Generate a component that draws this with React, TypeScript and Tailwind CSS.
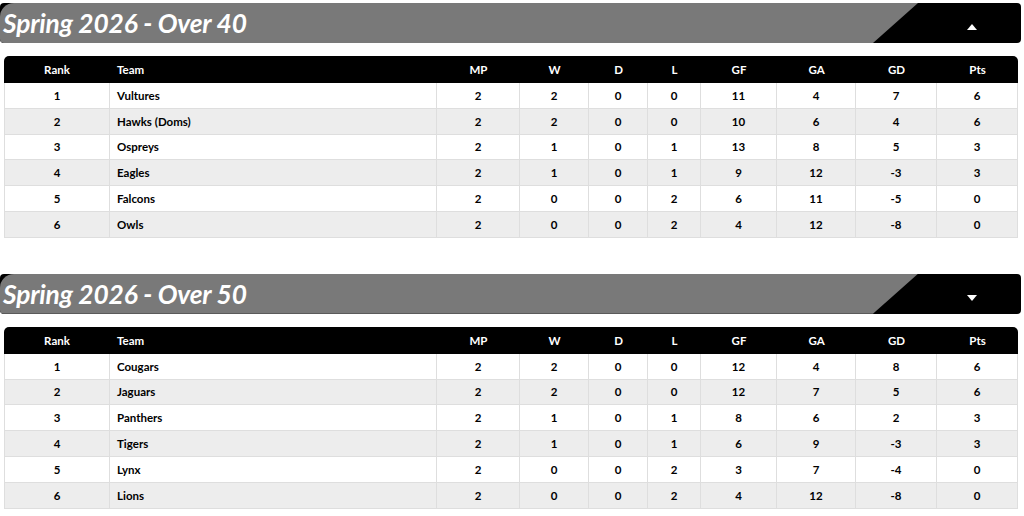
import { clsx as cn } from "clsx";

type Row = {
  rank: number;
  team: string;
  mp: number;
  w: number;
  d: number;
  l: number;
  gf: number;
  ga: number;
  gd: number;
  pts: number;
};

const OVER_40: Row[] = [
  { rank: 1, team: "Vultures", mp: 2, w: 2, d: 0, l: 0, gf: 11, ga: 4, gd: 7, pts: 6 },
  { rank: 2, team: "Hawks (Doms)", mp: 2, w: 2, d: 0, l: 0, gf: 10, ga: 6, gd: 4, pts: 6 },
  { rank: 3, team: "Ospreys", mp: 2, w: 1, d: 0, l: 1, gf: 13, ga: 8, gd: 5, pts: 3 },
  { rank: 4, team: "Eagles", mp: 2, w: 1, d: 0, l: 1, gf: 9, ga: 12, gd: -3, pts: 3 },
  { rank: 5, team: "Falcons", mp: 2, w: 0, d: 0, l: 2, gf: 6, ga: 11, gd: -5, pts: 0 },
  { rank: 6, team: "Owls", mp: 2, w: 0, d: 0, l: 2, gf: 4, ga: 12, gd: -8, pts: 0 },
];

const OVER_50: Row[] = [
  { rank: 1, team: "Cougars", mp: 2, w: 2, d: 0, l: 0, gf: 12, ga: 4, gd: 8, pts: 6 },
  { rank: 2, team: "Jaguars", mp: 2, w: 2, d: 0, l: 0, gf: 12, ga: 7, gd: 5, pts: 6 },
  { rank: 3, team: "Panthers", mp: 2, w: 1, d: 0, l: 1, gf: 8, ga: 6, gd: 2, pts: 3 },
  { rank: 4, team: "Tigers", mp: 2, w: 1, d: 0, l: 1, gf: 6, ga: 9, gd: -3, pts: 3 },
  { rank: 5, team: "Lynx", mp: 2, w: 0, d: 0, l: 2, gf: 3, ga: 7, gd: -4, pts: 0 },
  { rank: 6, team: "Lions", mp: 2, w: 0, d: 0, l: 2, gf: 4, ga: 12, gd: -8, pts: 0 },
];

// column widths in px, summing to 1014
const COLUMNS = [
  { label: "Rank", className: "w-[106px] text-center" },
  { label: "Team", className: "w-[327px] text-left pl-[7px]" },
  { label: "MP", className: "w-[83px] text-center" },
  { label: "W", className: "w-[69px] text-center" },
  { label: "D", className: "w-[59px] text-center" },
  { label: "L", className: "w-[53px] text-center" },
  { label: "GF", className: "w-[76px] text-center" },
  { label: "GA", className: "w-[79px] text-center" },
  { label: "GD", className: "w-[81px] text-center" },
  { label: "Pts", className: "w-[81px] text-center" },
];

function Arrow({ up }: { up: boolean }) {
  return (
    <svg width="10" height="6" viewBox="0 0 10 6" className="mt-[8px]">
      {up ? <polygon points="0,6 5,0 10,6" fill="#fff" /> : <polygon points="0,0 10,0 5,6" fill="#fff" />}
    </svg>
  );
}

function SectionBar({ title, open }: { title: string; open: boolean }) {
  return (
    <div className="flex h-[40px] bg-black rounded-[4px] overflow-hidden">
      <div className="flex-1 bg-[#797979] rounded-tl-[14px] rounded-bl-[3px] [clip-path:polygon(0_0,100%_0,calc(100%-45px)_100%,0_100%)] flex items-center pl-[3px]">
        <h2 className="text-white italic font-bold text-[26.3px] leading-none tracking-[-0.15px] pt-[1px]">{title}</h2>
      </div>
      <div className="w-[103px] flex items-center justify-center pl-[5px]">
        <Arrow up={open} />
      </div>
    </div>
  );
}

function StandingsTable({ rows }: { rows: Row[] }) {
  return (
    <table className="ml-[4px] mr-[3px] mt-[13px] w-[1014px] table-fixed border-separate border-spacing-0 text-[11.5px] font-bold">
      <thead>
        <tr className="h-[27px]">
          {COLUMNS.map((c, i) => (
            <th
              key={c.label}
              className={cn(
                "bg-black text-white font-bold",
                c.className,
                i === 0 && "rounded-tl-[5px]",
                i === COLUMNS.length - 1 && "rounded-tr-[5px]"
              )}
            >
              {c.label}
            </th>
          ))}
        </tr>
      </thead>
      <tbody className="text-black">
        {rows.map((r, idx) => {
          const cells = [r.rank, r.team, r.mp, r.w, r.d, r.l, r.gf, r.ga, r.gd, r.pts];
          return (
            <tr key={r.team} className={cn("h-[25.8px]", idx % 2 === 1 ? "bg-[#ededed]" : "bg-white")}>
              {cells.map((v, i) => (
                <td
                  key={i}
                  className={cn(
                    "border-b border-r border-[#dedede] p-0",
                    i === 0 && "border-l",
                    COLUMNS[i].className
                  )}
                >
                  {v}
                </td>
              ))}
            </tr>
          );
        })}
      </tbody>
    </table>
  );
}

export default function App() {
  return (
    <div className="w-[1024px] bg-white pr-[3px] pt-[3px]" style={{ fontFamily: "Lato, 'Noto Sans', sans-serif" }}>
      <section>
        <SectionBar title="Spring 2026 - Over 40" open={true} />
        <StandingsTable rows={OVER_40} />
      </section>
      <section className="mt-[36px]">
        <SectionBar title="Spring 2026 - Over 50" open={false} />
        <StandingsTable rows={OVER_50} />
      </section>
    </div>
  );
}
